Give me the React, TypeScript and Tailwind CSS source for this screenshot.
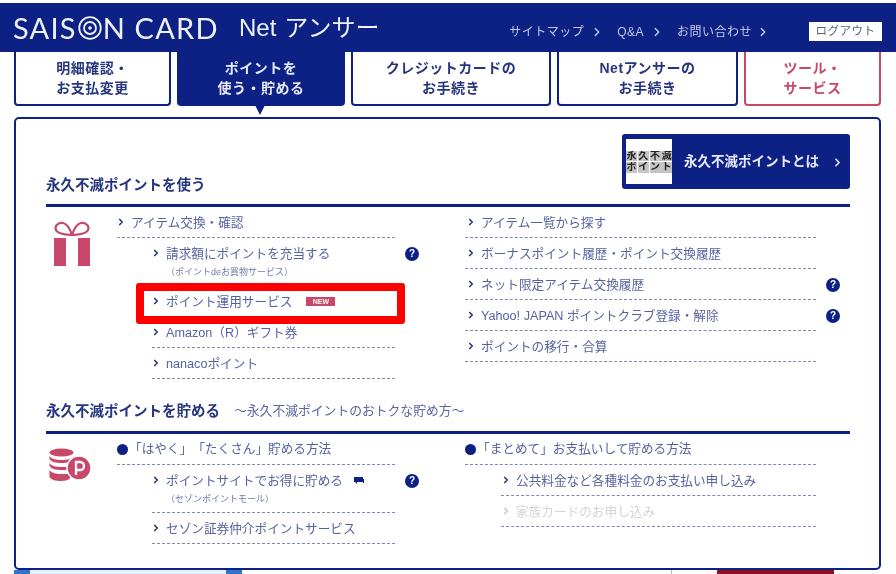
import { ChevronRight } from "lucide-react";
import type { ReactNode } from "react";

const tabs = [
  { lines: ["明細確認・", "お支払変更"], width: "w-[157px]" },
  { lines: ["ポイントを", "使う・貯める"], width: "w-[168px]", active: true },
  { lines: ["クレジットカードの", "お手続き"], width: "w-[200px]" },
  { lines: ["Netアンサーの", "お手続き"], width: "w-[181px]" },
  { lines: ["ツール・", "サービス"], width: "w-[137px]", tool: true },
];

function HelpIcon() {
  return (
    <span className="absolute right-[-24px] top-[9px] flex h-[14px] w-[14px] items-center justify-center rounded-full bg-[#0d2185] text-[10px] leading-none font-bold text-white">
      ?
    </span>
  );
}

function Row({
  children,
  note,
  help,
  pad = "pl-[14px]",
  muted,
  tall,
  extra,
}: {
  children: ReactNode;
  note?: string;
  help?: boolean;
  pad?: string;
  muted?: boolean;
  tall?: boolean;
  extra?: ReactNode;
}) {
  return (
    <div
      className={`relative border-b border-dashed border-[#7f88b5] ${pad} ${
        tall ? "h-[48px] pt-[7px]" : "flex h-[31px] items-center pt-[1px]"
      } ${muted ? "text-[#d4d4d8]" : "text-[#56639f]"}`}
    >
      <ChevronRight
        size={10}
        strokeWidth={4}
        className={`absolute top-[10px] -ml-[15px] ${muted ? "text-[#c8c8cc]" : "text-[#27357f]"}`}
      />
      <div className="flex items-center text-[12.65px] leading-[18px]">{children}</div>
      {note && <div className="mt-[2px] text-[9px] leading-[14px] text-[#6f79aa]">{note}</div>}
      {extra}
      {help && <HelpIcon />}
    </div>
  );
}

function Gift() {
  return (
    <svg width="38" height="46" viewBox="0 0 38 46" fill="none">
      <path d="M19 14C14 14 3 13 2.500 7.500 2.500 3 7 1.500 10 2c4 .7 7 6 9 12z" stroke="#c8486a" strokeWidth="2.200" />
      <path d="M19 14c5 0 16-1 16.500-6.500C35.500 3 31 1.500 28 2c-4 .7-7 6-9 12z" stroke="#c8486a" strokeWidth="2.200" />
      <rect x="1" y="17" width="12" height="28" fill="#c8486a" />
      <rect x="25" y="17" width="12" height="28" fill="#c8486a" />
    </svg>
  );
}

function Coins() {
  return (
    <svg width="42" height="36" viewBox="0 0 42 36">
      <ellipse cx="12.500" cy="4.500" rx="12" ry="4" fill="#c8486a" />
      <path d="M.5 8c2 3 6 4 12 4s10-1 12-4v3c-2 3-6 4-12 4S2.500 14 .5 11z" fill="#c8486a" />
      <path d="M.5 15c2 3 6 4 12 4h6v3h-6C6.500 22 2.500 21 .5 18z" fill="#c8486a" />
      <path d="M.5 22c2 3 6 4 12 4h8l1 3-1 2c-2 1-5 2-8 2-6 0-10-1-12-4z" fill="#c8486a" />
      <circle cx="30" cy="20" r="12" fill="#c8486a" stroke="#fff" strokeWidth="1.500" />
      <path d="M27 27V14h4a4 4 0 0 1 0 8h-4" fill="none" stroke="#fff" strokeWidth="2.300" />
    </svg>
  );
}

function Bullet() {
  return <span className="mr-[1px] h-[11px] w-[11px] shrink-0 rounded-full bg-[#0d2185]" />;
}

export default function App() {
  return (
    <div className="relative h-[574px] w-[896px] overflow-hidden bg-white pt-[3px] font-['Liberation_Sans','Noto_Sans_CJK_JP',sans-serif] blur-[0.5px] [text-spacing-trim:space-all]">
      <header className="flex h-[49px] items-center bg-[#0d2185] pl-[13px] pr-[14px]">
        <div className="flex w-[226px] items-center font-['Lato'] text-[29px] leading-none font-normal tracking-[1.2px] whitespace-nowrap text-[#eef0fa]">
          SAIS
          <svg width="24" height="24" viewBox="0 0 24 24" fill="none" className="mx-[1px]">
            <circle cx="12" cy="12" r="10.800" stroke="#eef0fa" strokeWidth="1.800" />
            <circle cx="12" cy="12" r="6" stroke="#eef0fa" strokeWidth="1.800" />
            <circle cx="12" cy="12" r="1.800" fill="#eef0fa" />
          </svg>
          N CARD
        </div>
        <div className="text-[24px] leading-none whitespace-nowrap text-[#eef0fa]">
          Net<span className="ml-[8px]">アンサー</span>
        </div>
        <nav className="mt-[8px] ml-auto flex items-center text-[12px] tracking-[0.5px] text-[#c3c9e6]">
          <span>サイトマップ</span>
          <ChevronRight size={14} strokeWidth={2.500} className="mr-[13px] ml-[6px]" />
          <span>Q&amp;A</span>
          <ChevronRight size={14} strokeWidth={2.500} className="mr-[13px] ml-[6px]" />
          <span>お問い合わせ</span>
          <ChevronRight size={14} strokeWidth={2.500} className="mr-[39px] ml-[4px]" />
          <span className="flex h-[19px] w-[73px] items-center justify-center bg-white text-[11.5px] text-[#5a5f78]">
            ログアウト
          </span>
        </nav>
      </header>

      <div className="flex h-[54px] gap-[6px] pl-[14px]">
        {tabs.map((t) => (
          <div
            key={t.lines[0]}
            className={`relative flex flex-col items-center justify-center rounded-b-[4px] border-x-2 border-b-2 text-[14px] leading-[20px] font-bold tracking-[0.5px] ${t.width} ${
              t.active
                ? "border-[#0d2185] bg-[#0d2185] text-[#e6e9f7]"
                : t.tool
                  ? "border-[#c8486a] text-[#c8486a]"
                  : "border-[#0d2185] text-[#27357f]"
            }`}
          >
            <span>{t.lines[0]}</span>
            <span>{t.lines[1]}</span>
            {t.active && (
              <span className="absolute bottom-[-11px] left-[76px] h-0 w-0 border-x-[5px] border-t-[10px] border-x-transparent border-t-[#0d2185]" />
            )}
          </div>
        ))}
      </div>

      <main className="mt-[11px] ml-[14px] h-[453px] w-[867px] rounded-[5px] border-2 border-[#0d2185] pr-[29px] pl-[30px]">
        <section className="flex items-end justify-between border-b-[3px] border-[#0d2185] pt-[15px]">
          <h2 className="mb-[9px] text-[14.5px] leading-[20px] font-bold text-[#27357f]">永久不滅ポイントを使う</h2>
          <a className="mb-[15px] flex h-[55px] w-[228px] items-center rounded-[3px] bg-[#0d2185] pl-[4px]">
            <span className="flex h-[45px] w-[46px] items-center justify-center bg-white">
              <span className="grid grid-cols-4 gap-px bg-white text-[10.5px] leading-[10.5px] font-bold text-[#222]">
                {"永久不滅ポイント".split("").map((c, i) => (
                  <span key={i} className="w-[11px] overflow-hidden bg-[#c4c4c4] text-center text-[10px]">
                    {c}
                  </span>
                ))}
              </span>
            </span>
            <span className="mt-[1px] ml-[12px] text-[13.5px] font-bold text-[#e6e9f7]">永久不滅ポイントとは</span>
            <ChevronRight size={13} strokeWidth={3} className="mt-[1px] ml-[12px] text-[#e6e9f7]" />
          </a>
        </section>

        <div className="flex">
          <div className="w-[71px] pt-[14px] pl-[7px]">
            <Gift />
          </div>
          <div className="w-[278px]">
            <Row>アイテム交換・確認</Row>
            <div className="ml-[35px]">
              <Row tall help note="（ポイントdeお買物サービス）">請求額にポイントを充当する</Row>
              <Row
                extra={
                  <span className="absolute top-[-3px] right-[-10px] bottom-[-8px] left-[-16px] rounded-[3px] border-[8px] border-[#ff0000]" />
                }
              >
                ポイント運用サービス
                <span className="ml-[14px] flex h-[9px] w-[29px] items-center justify-center bg-[#c8486a] text-[7px] leading-none font-bold text-white">
                  NEW
                </span>
              </Row>
              <Row>Amazon（R）ギフト券</Row>
              <Row>nanacoポイント</Row>
            </div>
          </div>
          <div className="ml-[70px] w-[351px]">
            <Row pad="pl-[16px]">アイテム一覧から探す</Row>
            <Row pad="pl-[16px]">ボーナスポイント履歴・ポイント交換履歴</Row>
            <Row pad="pl-[16px]" help>ネット限定アイテム交換履歴</Row>
            <Row pad="pl-[16px]" help>Yahoo! JAPAN ポイントクラブ登録・解除</Row>
            <Row pad="pl-[16px]">ポイントの移行・合算</Row>
          </div>
        </div>

        <section className="mt-[22px] flex items-center border-b-[3px] border-[#0d2185] pb-[10px]">
          <h2 className="text-[14.5px] leading-[20px] font-bold text-[#27357f]">永久不滅ポイントを貯める</h2>
          <span className="ml-[14px] text-[12.8px] leading-[20px] text-[#5a669f]">～永久不滅ポイントのおトクな貯め方～</span>
        </section>

        <div className="flex">
          <div className="w-[71px] pt-[14px] pl-[3px]">
            <Coins />
          </div>
          <div className="w-[278px]">
            <div className="flex h-[31px] items-center border-b border-dashed border-[#7f88b5] pt-[1px] text-[12.65px] text-[#56639f]">
              <Bullet />「はやく」「たくさん」貯める方法
            </div>
            <div className="ml-[35px]">
              <Row
                tall
                help
                note="（セゾンポイントモール）"
                extra={
                  <svg width="10" height="7" viewBox="0 0 10 7" className="absolute top-[12px] left-[202px]">
                    <path d="M0 0h9v5H3v2L1 5H0zM9 2h1v4H9z" fill="#0d2185" />
                  </svg>
                }
              >
                ポイントサイトでお得に貯める
              </Row>
              <Row>セゾン証券仲介ポイントサービス</Row>
            </div>
          </div>
          <div className="ml-[70px] w-[351px]">
            <div className="flex h-[31px] items-center border-b border-dashed border-[#7f88b5] pt-[1px] text-[12.65px] text-[#56639f]">
              <Bullet />「まとめて」お支払いして貯める方法
            </div>
            <div className="ml-[36px]">
              <Row pad="pl-[15px]">公共料金など各種料金のお支払い申し込み</Row>
              <Row pad="pl-[15px]" muted>家族カードのお申し込み</Row>
            </div>
          </div>
        </div>
      </main>

      <div className="ml-[14px] flex h-[4px]">
        <span className="w-[16px] bg-[#2f74c8]" />
        <span className="w-[196px] bg-[#e6f3fa]" />
        <span className="w-[16px] bg-[#2f74c8]" />
        <span className="ml-[429px] w-px bg-[#bbbbbb]" />
        <span className="ml-[45px] w-[117px] bg-[#8a1420]" />
      </div>
    </div>
  );
}
